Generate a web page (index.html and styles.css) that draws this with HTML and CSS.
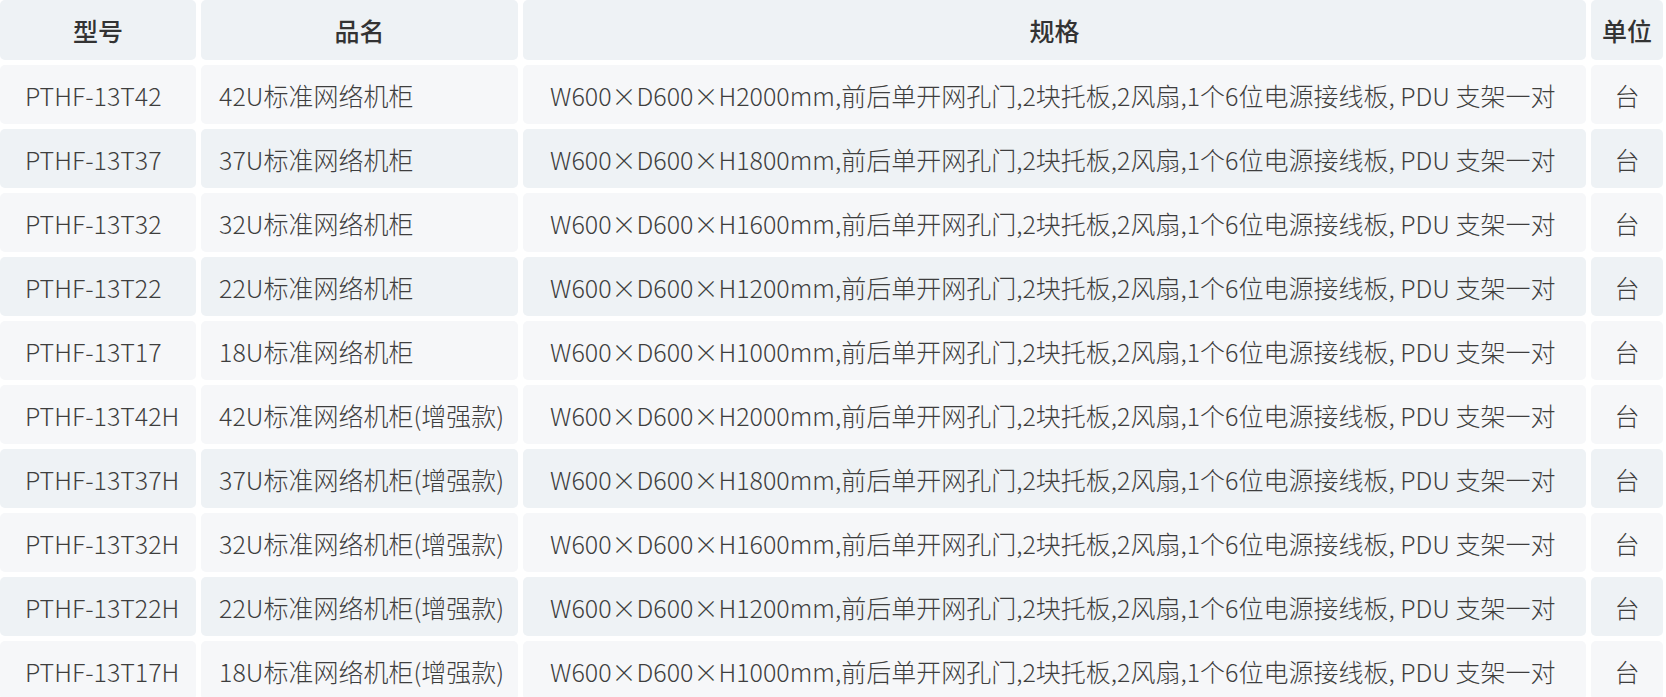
FILE: index.html
```html
<!DOCTYPE html>
<html lang="zh-CN">
<head>
<meta charset="utf-8">
<title>网络机柜规格</title>
<link rel="stylesheet" href="styles.css">
</head>
<body>
<table class="spec">
  <colgroup>
    <col class="c-model"><col class="c-name"><col class="c-spec"><col class="c-unit">
  </colgroup>
  <thead>
    <tr><th>型号</th><th>品名</th><th>规格</th><th>单位</th></tr>
  </thead>
  <tbody>
    <tr class="odd"><td class="model">PTHF-13T42</td><td class="name">42U标准网络机柜</td><td class="desc">W600×D600×H2000mm,前后单开网孔门,2块托板,2风扇,1个6位电源接线板, PDU 支架一对</td><td class="unit">台</td></tr>
    <tr class="even"><td class="model">PTHF-13T37</td><td class="name">37U标准网络机柜</td><td class="desc">W600×D600×H1800mm,前后单开网孔门,2块托板,2风扇,1个6位电源接线板, PDU 支架一对</td><td class="unit">台</td></tr>
    <tr class="odd"><td class="model">PTHF-13T32</td><td class="name">32U标准网络机柜</td><td class="desc">W600×D600×H1600mm,前后单开网孔门,2块托板,2风扇,1个6位电源接线板, PDU 支架一对</td><td class="unit">台</td></tr>
    <tr class="even"><td class="model">PTHF-13T22</td><td class="name">22U标准网络机柜</td><td class="desc">W600×D600×H1200mm,前后单开网孔门,2块托板,2风扇,1个6位电源接线板, PDU 支架一对</td><td class="unit">台</td></tr>
    <tr class="odd"><td class="model">PTHF-13T17</td><td class="name">18U标准网络机柜</td><td class="desc">W600×D600×H1000mm,前后单开网孔门,2块托板,2风扇,1个6位电源接线板, PDU 支架一对</td><td class="unit">台</td></tr>
    <tr class="odd"><td class="model">PTHF-13T42H</td><td class="name">42U标准网络机柜(增强款)</td><td class="desc">W600×D600×H2000mm,前后单开网孔门,2块托板,2风扇,1个6位电源接线板, PDU 支架一对</td><td class="unit">台</td></tr>
    <tr class="even"><td class="model">PTHF-13T37H</td><td class="name">37U标准网络机柜(增强款)</td><td class="desc">W600×D600×H1800mm,前后单开网孔门,2块托板,2风扇,1个6位电源接线板, PDU 支架一对</td><td class="unit">台</td></tr>
    <tr class="odd"><td class="model">PTHF-13T32H</td><td class="name">32U标准网络机柜(增强款)</td><td class="desc">W600×D600×H1600mm,前后单开网孔门,2块托板,2风扇,1个6位电源接线板, PDU 支架一对</td><td class="unit">台</td></tr>
    <tr class="even"><td class="model">PTHF-13T22H</td><td class="name">22U标准网络机柜(增强款)</td><td class="desc">W600×D600×H1200mm,前后单开网孔门,2块托板,2风扇,1个6位电源接线板, PDU 支架一对</td><td class="unit">台</td></tr>
    <tr class="odd"><td class="model">PTHF-13T17H</td><td class="name">18U标准网络机柜(增强款)</td><td class="desc">W600×D600×H1000mm,前后单开网孔门,2块托板,2风扇,1个6位电源接线板, PDU 支架一对</td><td class="unit">台</td></tr>
  </tbody>
</table>
</body>
</html>
```
FILE: styles.css
```css
html, body {
  margin: 0;
  padding: 0;
  background: #ffffff;
  overflow: hidden;
}
body {
  font-family: "Noto Sans CJK SC", "Noto Sans", sans-serif;
  color: #3e3e3e;
}
.spec {
  border-collapse: separate;
  border-spacing: 5px;
  margin: -5px;
  table-layout: fixed;
  width: 1673px;
}
.c-model { width: 196px; }
.c-name { width: 317px; }
.c-spec { width: 1063px; }
.c-unit { width: 72px; }
.spec th, .spec td {
  padding: 0;
  border-radius: 5px;
  white-space: nowrap;
  font-size: 25px;
}
.spec th {
  height: 60px;
  background: #eef2f5;
  color: #333333;
  font-weight: 500;
  text-align: center;
}
.spec td {
  height: 59px;
  font-weight: 300;
  text-align: left;
}
.spec tr.odd td { background: #f6f7f9; }
.spec tr.even td { background: #eef2f5; }
.spec td.model { padding-left: 25px; }
.spec td.name { padding-left: 18px; }
.spec td.desc { padding-left: 27px; }
.spec td.unit { text-align: center; }
```
